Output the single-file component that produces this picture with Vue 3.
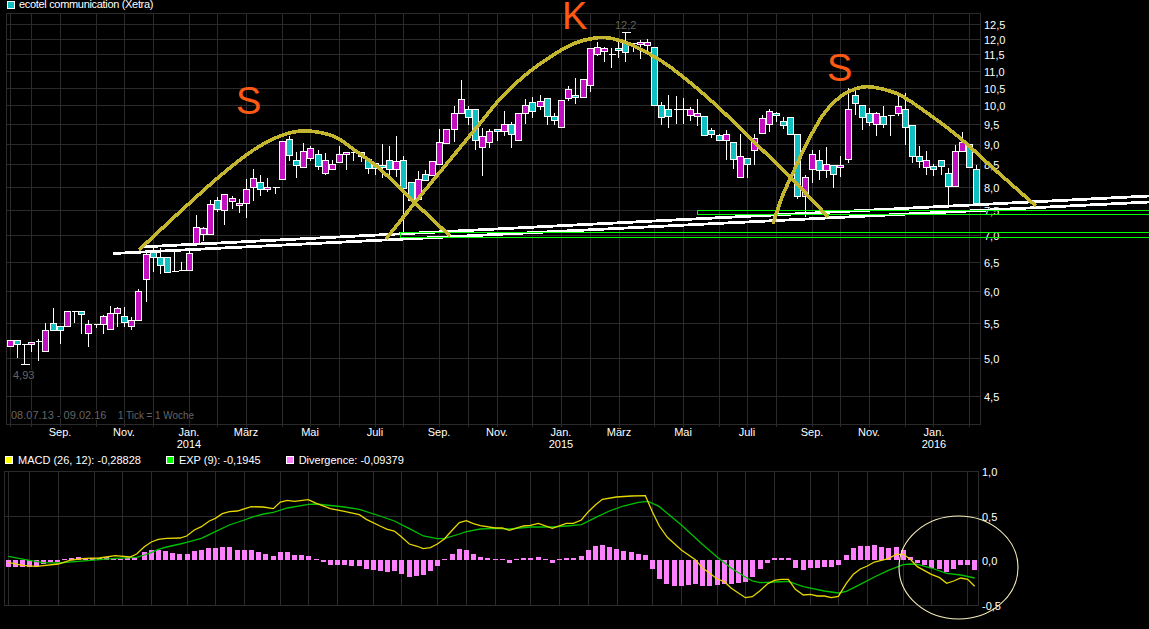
<script setup>
// all chart data was read off the picture at 3x, so it gets divided by 3 here
const S = 3;

const hLines = [24, 39, 54, 71, 88, 105, 124, 144, 164, 187, 210, 235, 262, 291, 323, 358, 396];
const vLines = [10, 31, 60, 96, 124, 153, 189, 217, 246, 282, 310, 339, 375, 403, 439, 468, 497, 532, 561, 590, 619, 654, 683, 719, 747, 776, 812, 840, 869, 905, 933, 969];

const priceLabels = [
  ["12,5", 25], ["12,0", 40], ["11,5", 55], ["11,0", 72], ["10,5", 89], ["10,0", 106],
  ["9,5", 125], ["9,0", 145], ["8,5", 165], ["8,0", 188], ["7,5", 211], ["7,0", 236],
  ["6,5", 263], ["6,0", 292], ["5,5", 324], ["5,0", 359], ["4,5", 397],
];
const macdLabels = [["1,0", 472], ["0,5", 517], ["0,0", 561], ["-0,5", 606]];
const months = [
  ["Sep.", 60], ["Nov.", 124], ["Jan.", 189], ["März", 246], ["Mai", 310], ["Juli", 375],
  ["Sep.", 439], ["Nov.", 497], ["Jan.", 561], ["März", 619], ["Mai", 683], ["Juli", 747],
  ["Sep.", 812], ["Nov.", 869], ["Jan.", 934],
];
const years = [["2014", 189], ["2015", 561], ["2016", 934]];

// x, wick top, body top, body bottom, wick low, kind (m up, c down, d flat)
const raw = [
  [31,0,1022,1038,0,"m"],[52,0,1022,1032,1073,"c"],[73,0,1033,1033,1093,"d"],[94,0,1027,1033,1055,"m"],
  [115,1017,1025,1025,1082,"d"],[136,969,991,1054,0,"m"],[160,924,971,990,0,"c"],[181,0,980,990,1032,"c"],
  [202,0,935,979,0,"m"],[223,0,935,935,969,"d"],[244,0,935,943,1002,"c"],[265,961,974,1000,1040,"m"],
  [289,0,973,973,983,"d"],[310,945,950,973,1002,"m"],[331,918,941,988,0,"m"],[352,921,925,940,980,"m"],
  [373,921,950,967,982,"c"],[394,950,962,979,990,"m"],[415,867,874,961,0,"m"],[439,750,764,838,905,"m"],
  [460,740,758,772,816,"c"],[481,745,773,796,821,"c"],[502,770,773,816,0,"c"],[523,755,815,815,0,"d"],
  [544,786,811,811,0,"d"],[568,750,761,811,0,"m"],[589,645,683,730,0,"m"],[610,680,686,703,722,"m"],
  [631,600,613,703,0,"m"],[652,590,602,628,635,"c"],[673,0,584,632,675,"m"],[697,588,596,604,628,"m"],
  [718,597,610,617,638,"m"],[739,537,568,610,654,"m"],[760,507,535,562,602,"m"],[781,525,548,568,587,"c"],
  [802,534,563,568,575,"m"],[826,0,562,562,582,"d"],[847,0,424,538,0,"m"],[868,408,419,466,482,"c"],
  [889,457,482,496,533,"c"],[910,430,455,502,0,"m"],[931,438,446,475,482,"m"],[955,450,463,499,510,"c"],
  [976,460,481,520,524,"m"],[997,480,494,508,0,"m"],[1018,438,463,487,0,"m"],[1039,0,458,462,510,"m"],
  [1060,0,458,458,482,"d"],[1084,0,458,470,487,"c"],[1105,0,478,505,522,"c"],[1126,0,490,506,525,"c"],
  [1147,432,496,502,533,"c"],[1168,438,481,508,527,"c"],[1189,408,485,508,530,"m"],[1210,468,481,565,700,"c"],
  [1234,0,547,600,0,"c"],[1255,513,539,597,0,"m"],[1276,510,523,542,0,"c"],[1297,0,484,526,0,"m"],
  [1318,388,427,493,0,"m"],[1339,0,388,430,0,"m"],[1363,318,340,388,425,"m"],[1384,240,298,340,0,"m"],
  [1405,318,328,353,375,"c"],[1426,0,328,421,450,"c"],[1447,385,410,442,527,"m"],[1468,388,394,428,445,"m"],
  [1492,0,388,394,423,"c"],[1513,333,373,395,407,"m"],[1534,365,373,403,443,"c"],[1555,0,340,421,0,"m"],
  [1576,297,316,340,372,"m"],[1597,292,307,334,353,"c"],[1621,285,304,320,330,"m"],[1642,0,295,349,375,"c"],
  [1663,338,349,361,375,"c"],[1684,0,301,382,0,"m"],[1705,258,268,296,303,"m"],[1726,235,287,292,312,"c"],
  [1750,0,238,292,0,"m"],[1771,0,145,256,275,"m"],[1792,125,142,163,167,"m"],[1813,140,146,154,186,"m"],
  [1834,145,163,163,204,"d"],[1855,125,146,151,175,"c"],[1876,97,130,157,186,"c"],[1900,130,130,130,157,"d"],
  [1921,120,127,133,178,"m"],[1942,118,127,136,158,"m"],[1963,0,142,317,0,"c"],[1984,307,317,352,375,"c"],
  [2005,285,328,349,384,"c"],[2029,288,328,328,372,"d"],[2050,294,328,328,372,"d"],[2071,322,328,346,363,"m"],
  [2092,297,340,349,378,"m"],[2113,0,349,406,0,"c"],[2134,385,391,403,415,"c"],[2158,402,406,421,0,"c"],
  [2179,390,403,421,480,"m"],[2200,0,427,478,508,"c"],[2221,402,469,532,0,"m"],[2242,0,475,493,533,"c"],
  [2263,403,415,451,494,"m"],[2287,345,355,400,0,"m"],[2308,327,334,373,395,"m"],[2329,335,340,346,366,"c"],
  [2350,350,364,376,388,"c"],[2371,0,352,403,0,"c"],[2392,0,403,589,596,"c"],[2416,525,532,589,651,"m"],
  [2437,450,463,508,548,"m"],[2458,450,481,511,540,"c"],[2479,441,494,511,533,"m"],[2500,0,496,523,564,"c"],
  [2521,468,496,501,530,"m"],[2545,265,328,478,488,"m"],[2566,265,286,310,345,"c"],[2587,0,316,352,390,"c"],
  [2608,325,340,367,378,"c"],[2629,337,340,373,407,"m"],[2650,318,349,373,384,"c"],[2671,0,347,347,407,"d"],
  [2695,277,319,340,347,"m"],[2716,279,328,382,434,"c"],[2737,0,376,469,488,"c"],[2758,438,469,484,505,"c"],
  [2779,453,481,502,524,"m"],[2800,493,499,508,527,"c"],[2824,0,481,499,524,"c"],[2845,504,520,559,620,"c"],
  [2866,436,454,559,0,"m"],[2887,396,427,454,0,"m"],[2908,0,433,502,0,"c"],[2929,496,508,610,0,"c"],
];

const candles = raw.map(([x, top, bodyTop, bodyBottom, low, kind]) => {
  const px = Math.floor(x / S) + 0.5;
  const yTop = Math.floor(bodyTop / S) + 0.5;
  const yBottom = Math.floor(bodyBottom / S) + 0.5;
  return {
    px, yTop, yBottom, kind,
    wickTop: top ? top / S : yTop,
    wickLow: low ? low / S : yBottom,
  };
});

// the little caps on the year's low and high
const caps = [[73, 1093], [1876, 97]].map(([x, y]) => ({ px: Math.floor(x / S) + 0.5, y: Math.floor(y / S) + 0.5 }));

const bars = [
  [25,381],[46,381],[67,381],[88,381],[109,381],[130,372],[151,367],[172,366],[193,358],[214,354],[235,351],[256,355],
  [277,355],[298,354],[319,352],[340,354],[361,356],[382,355],[403,352],[433,336],[454,330],[475,330],[496,333],[517,339],
  [538,342],[562,342],[583,333],[604,330],[625,324],[646,324],[667,321],[688,321],[712,330],[733,330],[754,330],[775,336],
  [796,342],[820,348],[841,336],[862,336],[883,345],[904,345],[925,348],[949,357],[970,366],[991,375],[1012,375],[1033,375],
  [1054,378],[1078,378],[1099,387],[1120,390],[1141,393],[1162,396],[1183,393],[1204,402],[1228,411],[1249,408],[1270,405],
  [1291,393],[1312,378],[1333,358],[1357,342],[1378,327],[1399,330],[1420,342],[1441,351],[1462,354],[1486,358],[1507,358],
  [1528,369],[1549,358],[1570,354],[1591,354],[1615,351],[1636,357],[1657,369],[1678,358],[1699,354],[1720,354],[1744,348],
  [1765,330],[1786,318],[1807,315],[1828,321],[1849,327],[1870,333],[1894,336],[1915,342],[1936,345],[1957,387],[1978,417],
  [1999,432],[2023,438],[2044,438],[2065,435],[2086,432],[2107,438],[2128,438],[2152,435],[2173,432],[2194,432],[2215,429],
  [2236,426],[2257,411],[2281,387],[2302,369],[2323,354],[2344,354],[2365,354],[2386,384],[2410,390],[2431,384],[2452,384],
  [2473,381],[2494,381],[2515,375],[2539,345],[2560,324],[2581,318],[2602,318],[2623,315],[2644,321],[2665,324],[2689,321],
  [2710,330],[2731,351],[2752,369],[2773,375],[2794,384],[2819,388],[2840,396],[2861,387],[2882,375],[2903,375],[2924,390],
].map(([x, v]) => {
  const base = 360;
  const top = Math.min(v, base);
  const h = Math.max(Math.abs(v - base) / S, 1);
  return { x: Math.round((x - 7.5) / S), y: 440 + Math.round(top / S), h: Math.round(h) };
});

function toPolyline(points) {
  return points.map(([x, y]) => `${x / S},${440 + y / S}`).join(" ");
}

const macdLine = toPolyline([
  [25,367],[67,376],[109,379],[175,372],[214,360],[256,355],[298,354],[346,347],[390,351],[410,342],[433,320],[454,306],
  [475,298],[500,295],[540,294],[560,288],[583,270],[604,260],[628,243],[646,235],[667,221],[688,215],[712,213],[754,200],
  [790,201],[820,206],[841,186],[862,181],[883,184],[925,179],[949,190],[991,206],[1033,214],[1078,224],[1099,238],[1140,258],
  [1162,268],[1183,273],[1204,290],[1228,312],[1249,318],[1270,326],[1291,323],[1312,312],[1333,297],[1357,270],[1378,248],
  [1399,242],[1420,251],[1441,257],[1486,264],[1507,264],[1528,271],[1570,258],[1591,256],[1615,250],[1657,265],[1699,250],
  [1720,250],[1744,240],[1765,215],[1786,195],[1807,178],[1849,171],[1894,168],[1936,167],[1957,215],[1978,258],[2002,292],
  [2044,330],[2086,359],[2107,383],[2128,399],[2152,417],[2173,425],[2194,445],[2236,473],[2257,470],[2280,452],[2302,432],
  [2323,421],[2344,418],[2365,418],[2386,448],[2410,465],[2431,463],[2452,468],[2473,468],[2494,473],[2515,469],[2539,430],
  [2560,403],[2581,387],[2602,378],[2623,366],[2665,356],[2689,343],[2710,343],[2731,358],[2752,380],[2794,403],[2819,413],
  [2840,430],[2861,423],[2882,414],[2903,418],[2924,439],
]);

const expLine = toPolyline([
  [25,349],[88,361],[130,368],[175,369],[235,364],[298,359],[346,355],[410,352],[433,345],[454,338],[475,328],[500,321],
  [540,312],[560,307],[604,295],[646,275],[688,255],[733,240],[754,232],[790,222],[820,217],[862,204],[925,193],[949,192],
  [1033,201],[1078,208],[1140,228],[1183,243],[1228,266],[1270,288],[1312,296],[1333,296],[1378,282],[1399,275],[1441,267],
  [1486,265],[1528,267],[1591,261],[1657,261],[1699,258],[1744,254],[1786,233],[1828,213],[1870,198],[1915,187],[1945,184],
  [1978,200],[2044,255],[2107,313],[2152,352],[2194,385],[2236,411],[2257,423],[2280,428],[2323,426],[2365,424],[2410,440],
  [2473,453],[2515,459],[2539,454],[2581,433],[2623,411],[2665,391],[2710,374],[2731,372],[2752,373],[2794,384],[2840,400],
  [2882,405],[2924,414],
]);

// Catmull-Rom through the points, the drawn-by-hand arcs have no corners
function smooth(p) {
  let d = `M${p[0][0]} ${p[0][1]}`;
  for (let i = 0; i < p.length - 1; i++) {
    const a = p[Math.max(i - 1, 0)];
    const b = p[i];
    const c = p[i + 1];
    const e = p[Math.min(i + 2, p.length - 1)];
    d += `C${b[0] + (c[0] - a[0]) / 6} ${b[1] + (c[1] - a[1]) / 6} ${c[0] - (e[0] - b[0]) / 6} ${c[1] - (e[1] - b[1]) / 6} ${c[0]} ${c[1]}`;
  }
  return d;
}

const arcs = [
  [[139,250],[182,210],[220,176],[252,151],[280,136],[304,131],[333,136],[353,149],[380,169],[413,201],[450,236]],
  [[386,239],[413,205],[440,172],[477,127],[500,99],[523,77],[547,59],[573,44],[595,38],[612,38.5],[632,45],[660,60],[687,80],[717,106],[747,135],[793,180],[828,217]],
  [[773,224],[782,197],[792,175],[807,143],[823,115],[840,97],[860,87.5],[875,87.5],[900,95],[930,115],[960,138],[993,168],[1036,206]],
].map(smooth);
</script>

<template>
  <div class="page">
    <div class="legend title">
      <span class="item"><i class="swatch cyan"></i><span class="name">ecotel communication (Xetra)</span></span>
    </div>

    <svg class="chart" width="1149" height="440" viewBox="0 13 1149 440">
      <g class="grid">
        <line v-for="y in hLines" :key="y" x1="6" :y1="y + .5" x2="980" :y2="y + .5" />
        <line v-for="x in vLines" :key="x" :x1="x + .5" y1="13" :x2="x + .5" y2="427" />
        <rect x="6.5" y="13.5" width="974" height="411" />
      </g>

      <g class="gray">
        <text x="13" y="379">4,93</text>
        <text x="615" y="29">12,2</text>
        <text x="11" y="419">08.07.13 - 09.02.16</text>
        <text x="118" y="419" textLength="76" lengthAdjust="spacingAndGlyphs">1 Tick = 1 Woche</text>
      </g>

      <g v-for="(c, i) in candles" :key="i" class="candle">
        <line class="wick" :x1="c.px" :y1="c.wickTop" :x2="c.px" :y2="c.wickLow" />
        <line v-if="c.kind === 'd'" class="wick" :x1="c.px - 3" :y1="c.yTop" :x2="c.px + 4" :y2="c.yTop" />
        <rect v-else :class="c.kind" :x="c.px - 3" :y="c.yTop" width="6" :height="c.yBottom - c.yTop" />
      </g>
      <line v-for="c in caps" :key="c.px" class="wick" :x1="c.px - 4" :y1="c.y" :x2="c.px + 5" :y2="c.y" />

      <g class="axis">
        <text v-for="[t, y] in priceLabels" :key="t" x="984" :y="y + 4">{{ t }}</text>
        <text v-for="([t, x], i) in months" :key="i" class="mid" :x="x" y="436">{{ t }}</text>
        <text v-for="[t, x] in years" :key="t" class="mid" :x="x" y="448">{{ t }}</text>
      </g>

      <g class="trend">
        <line x1="113" y1="253.5" x2="1149" y2="202" />
        <line x1="140" y1="247" x2="1149" y2="196" />
      </g>
      <g class="zones">
        <rect x="400.5" y="232.5" width="800" height="5" />
        <rect x="697.5" y="210.5" width="500" height="4" />
      </g>
      <path v-for="d in arcs" :key="d" class="arc" :d="d" />

      <text class="big" x="236" y="114">S</text>
      <text class="big" x="562" y="29">K</text>
      <text class="big" x="827" y="81">S</text>
    </svg>

    <div class="legend">
      <span class="item"><i class="swatch yellow"></i>MACD (26, 12): -0,28828</span>
      <span class="item"><i class="swatch green"></i>EXP (9): -0,1945</span>
      <span class="item"><i class="swatch pink"></i>Divergence: -0,09379</span>
    </div>

    <svg class="chart" width="1149" height="162" viewBox="0 467 1149 162">
      <g class="grid">
        <line x1="4" y1="516.5" x2="978" y2="516.5" />
        <line v-for="x in vLines" :key="x" :x1="x - 1.5" y1="471" :x2="x - 1.5" y2="605" />
        <rect x="4.5" y="471.5" width="974" height="134" />
      </g>
      <rect v-for="b in bars" :key="b.x" class="bar" :x="b.x" :y="b.y" width="5" :height="b.h" />
      <polyline class="exp" :points="expLine" />
      <polyline class="macd" :points="macdLine" />
      <g class="axis">
        <text v-for="[t, y] in macdLabels" :key="t" x="982" :y="y + 4">{{ t }}</text>
      </g>
      <ellipse class="ring" cx="958.5" cy="567.5" rx="59.5" ry="51.5" />
    </svg>
  </div>
</template>

<style scoped>
.page {
  width: 1149px;
  height: 629px;
  display: flex;
  flex-direction: column;
  overflow: hidden;

  background: #000;
  color: #fff;

  font-family: "Liberation Sans", Arial, sans-serif;
  font-size: 11px;
}

.legend {
  height: 14px;

  display: flex;
  align-items: center;
  gap: 25px;

  padding-left: 5px;

  line-height: 14px;
  white-space: nowrap;
}

.legend.title {
  height: 13px;
  padding-left: 7px;
  align-items: flex-start;
  line-height: 9px;
}

.name {
  letter-spacing: -.32px;
}

.item {
  display: flex;
  align-items: center;
  gap: 5px;
}

.swatch {
  width: 6px;
  height: 6px;
  border: 1px solid #fff;
}

.title .swatch {
  margin-right: -1px;
}

.cyan { background: #10c0c0; }
.yellow { background: #ffff00; }
.green { background: #00ff00; }
.pink { background: #ff80ff; }

.chart {
  display: block;
  overflow: visible;
  flex: none;
}

.chart text {
  font-family: "Liberation Sans", Arial, sans-serif;
  font-size: 11px;
}

.grid line, .grid rect {
  stroke: #2b2b2b;
  stroke-width: 1;
  fill: none;
  shape-rendering: crispEdges;
}

.gray text {
  fill: #666;
  stroke: #000;
  stroke-width: 2px;
  paint-order: stroke;
}

.wick {
  stroke: #fff;
  stroke-width: 1;
  shape-rendering: crispEdges;
}

.candle rect {
  stroke: #fff;
  stroke-width: 1;
  shape-rendering: crispEdges;
}

.m { fill: #c010c0; }
.c { fill: #10c0c0; }

.axis text { fill: #fff; }
.axis .mid { text-anchor: middle; }

.trend line {
  stroke: #fff;
  stroke-width: 2.8;
  shape-rendering: crispEdges;
}

.zones rect {
  fill: none;
  stroke: #00ff00;
  stroke-width: 1;
  shape-rendering: crispEdges;
}

.arc {
  fill: none;
  stroke: #c4b62f;
  stroke-width: 3.6;
  shape-rendering: crispEdges;
}

.big {
  fill: #ff5a14;
  font-size: 38px !important;
}

.bar {
  fill: #ff80ff;
  shape-rendering: crispEdges;
}

.exp {
  fill: none;
  stroke: #00c000;
  stroke-width: 1.3;
}

.macd {
  fill: none;
  stroke: #e6d800;
  stroke-width: 1.3;
}

.ring {
  fill: none;
  stroke: #f8efb8;
  stroke-width: 1.1;
}
</style>

<style>
html, body {
  background: #000;
}
</style>
